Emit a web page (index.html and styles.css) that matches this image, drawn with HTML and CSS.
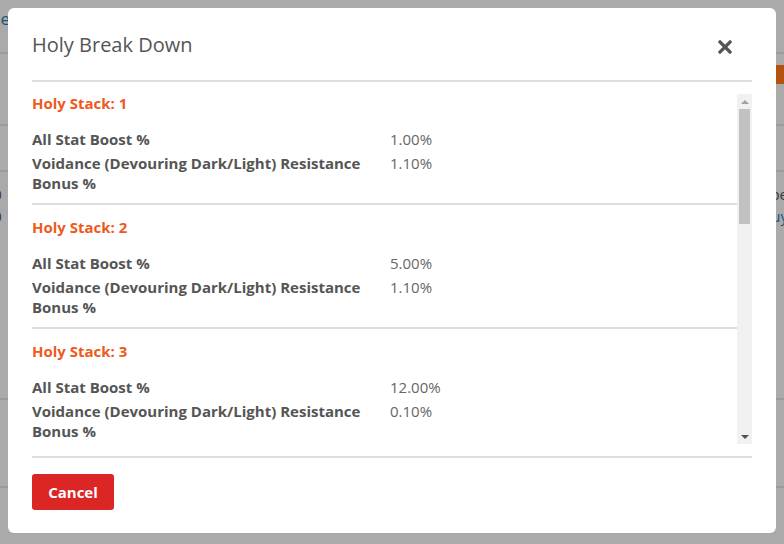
FILE: index.html
```html
<!DOCTYPE html>
<html lang="en">
<head>
<meta charset="utf-8">
<title>Holy Break Down</title>
<link rel="stylesheet" href="styles.css">
</head>
<body>
<div class="page">
  <div class="bg-row bg-top"><span class="bg-link">Home</span></div>
  <div class="bg-row bg-second"><span></span><span class="bg-orange"></span></div>
  <div class="bg-row bg-third"></div>
  <div class="bg-row bg-text">
    <div class="bg-left"><span>100</span><span>200</span></div>
    <div class="bg-right"><span>Type</span><span class="bg-blue">Buy</span></div>
  </div>
  <div class="bg-row bg-fourth"></div>
  <div class="bg-row bg-fifth"></div>
</div>

<div class="overlay">
  <div class="modal">
    <div class="modal-header">
      <h2 class="modal-title">Holy Break Down</h2>
      <button class="close" aria-label="Close">
        <svg width="14" height="14" viewBox="0 0 14 14"><path d="M2 2 L12 12 M12 2 L2 12" stroke="#555" stroke-width="3.2" stroke-linecap="square" fill="none"/></svg>
      </button>
    </div>
    <div class="modal-body">
      <div class="scroll-wrap">
        <div class="scroll">
          <section class="stack">
            <h3 class="stack-title">Holy Stack: 1</h3>
            <div class="stats">
              <div class="label">All Stat Boost %</div><div class="value">1.00%</div>
              <div class="label">Voidance (Devouring Dark/Light) Resistance Bonus %</div><div class="value">1.10%</div>
            </div>
          </section>
          <section class="stack">
            <h3 class="stack-title">Holy Stack: 2</h3>
            <div class="stats">
              <div class="label">All Stat Boost %</div><div class="value">5.00%</div>
              <div class="label">Voidance (Devouring Dark/Light) Resistance Bonus %</div><div class="value">1.10%</div>
            </div>
          </section>
          <section class="stack">
            <h3 class="stack-title">Holy Stack: 3</h3>
            <div class="stats">
              <div class="label">All Stat Boost %</div><div class="value">12.00%</div>
              <div class="label">Voidance (Devouring Dark/Light) Resistance Bonus %</div><div class="value">0.10%</div>
            </div>
          </section>
        </div>
        <div class="scrollbar" aria-hidden="true">
          <span class="sb-btn"><span class="arrow-up"></span></span>
          <span class="sb-track"><span class="sb-thumb"></span></span>
          <span class="sb-btn"><span class="arrow-down"></span></span>
        </div>
      </div>
    </div>
    <div class="modal-footer">
      <button class="cancel">Cancel</button>
    </div>
  </div>
</div>
</body>
</html>
```

FILE: styles.css
```css
* { box-sizing: border-box; }

html, body {
  margin: 0;
  padding: 0;
  width: 784px;
  height: 544px;
  overflow: hidden;
}

body {
  font-family: "Open Sans", "Noto Sans", sans-serif;
  background: #aaaaaa;
  color: #555;
}

/* dimmed page behind the dialog */
.page {
  display: flex;
  flex-direction: column;
  height: 544px;
  background: #aaaaaa;
  font-size: 15px;
  color: #333;
}

.bg-row {
  display: flex;
  justify-content: space-between;
  border-bottom: 2px solid #9b9b9b;
}

.bg-top {
  height: 54px;
  padding-top: 7px;
}

.bg-link {
  color: #1d5678;
  font-size: 17px;
  margin-left: -38px;
}

.bg-second {
  height: 72px;
  align-items: flex-start;
  padding-top: 11px;
}

.bg-orange {
  width: 40px;
  height: 19px;
  background: #b4520f;
  margin-right: -24px;
}

.bg-third { height: 46px; }

.bg-text {
  height: 228px;
  padding-top: 12px;
  color: #3b3b3b;
}

.bg-left, .bg-right {
  display: flex;
  flex-direction: column;
  gap: 2px;
  line-height: 20px;
}

.bg-left { margin-left: -24px; }
.bg-right { margin-right: -4px; align-items: flex-end; }
.bg-blue { color: #1d5678; margin-right: 0; }

.bg-fourth { height: 88px; }
.bg-fifth { flex: 1; border-bottom: none; }

/* overlay + modal */
.overlay {
  position: fixed;
  inset: 0;
  padding: 8px;
  display: flex;
}

.modal {
  width: 768px;
  height: 525px;
  background: #fff;
  border-radius: 6px;
  padding: 0 24px;
  display: flex;
  flex-direction: column;
}

.modal-header {
  display: flex;
  align-items: center;
  justify-content: space-between;
  height: 74px;
  padding-top: 2px;
  border-bottom: 2px solid #dedede;
}

.modal-title {
  margin: 0;
  font-size: 20px;
  font-weight: 400;
  line-height: 28px;
  color: #555;
}

.close {
  border: none;
  background: none;
  padding: 0;
  margin-right: 20px;
  margin-top: 4px;
  width: 14px;
  height: 14px;
  display: flex;
  cursor: pointer;
}

.modal-body {
  padding: 12px 0;
}

.scroll-wrap {
  display: flex;
  height: 350px;
}

.scroll {
  flex: 1;
  overflow: hidden;
  margin-top: -1px;
}

/* drawn scrollbar */
.scrollbar {
  width: 15px;
  flex: none;
  display: flex;
  flex-direction: column;
  background: #f1f1f1;
}

.sb-btn {
  height: 15px;
  display: flex;
  align-items: center;
  justify-content: center;
}

.arrow-up {
  width: 0;
  height: 0;
  border-left: 4px solid transparent;
  border-right: 4px solid transparent;
  border-bottom: 4px solid #a3a3a3;
}

.arrow-down {
  width: 0;
  height: 0;
  border-left: 4px solid transparent;
  border-right: 4px solid transparent;
  border-top: 4px solid #505050;
}

.sb-track {
  flex: 1;
  padding: 0 2px;
}

.sb-thumb {
  display: block;
  height: 115px;
  background: #c1c1c1;
}

.stack {
  padding-bottom: 10px;
  border-bottom: 2px solid #dedede;
}

.stack + .stack { padding-top: 12px; }

.stack-title {
  margin: 0;
  font-size: 15px;
  font-weight: 700;
  line-height: 20px;
  color: #ee5a1b;
}

.stats {
  display: grid;
  grid-template-columns: 340px 1fr;
  column-gap: 18px;
  row-gap: 4px;
  margin-top: 16px;
  font-size: 15px;
  line-height: 20px;
}

.label {
  font-weight: 700;
  color: #555;
}

.value {
  color: #666;
}

.modal-footer {
  border-top: 2px solid #dedede;
  padding-top: 16px;
}

.cancel {
  width: 82px;
  height: 36px;
  border: none;
  border-radius: 3px;
  background: #dc2626;
  color: #fff;
  font-family: "Open Sans", "Noto Sans", sans-serif;
  font-size: 15px;
  font-weight: 700;
  cursor: pointer;
}
```
